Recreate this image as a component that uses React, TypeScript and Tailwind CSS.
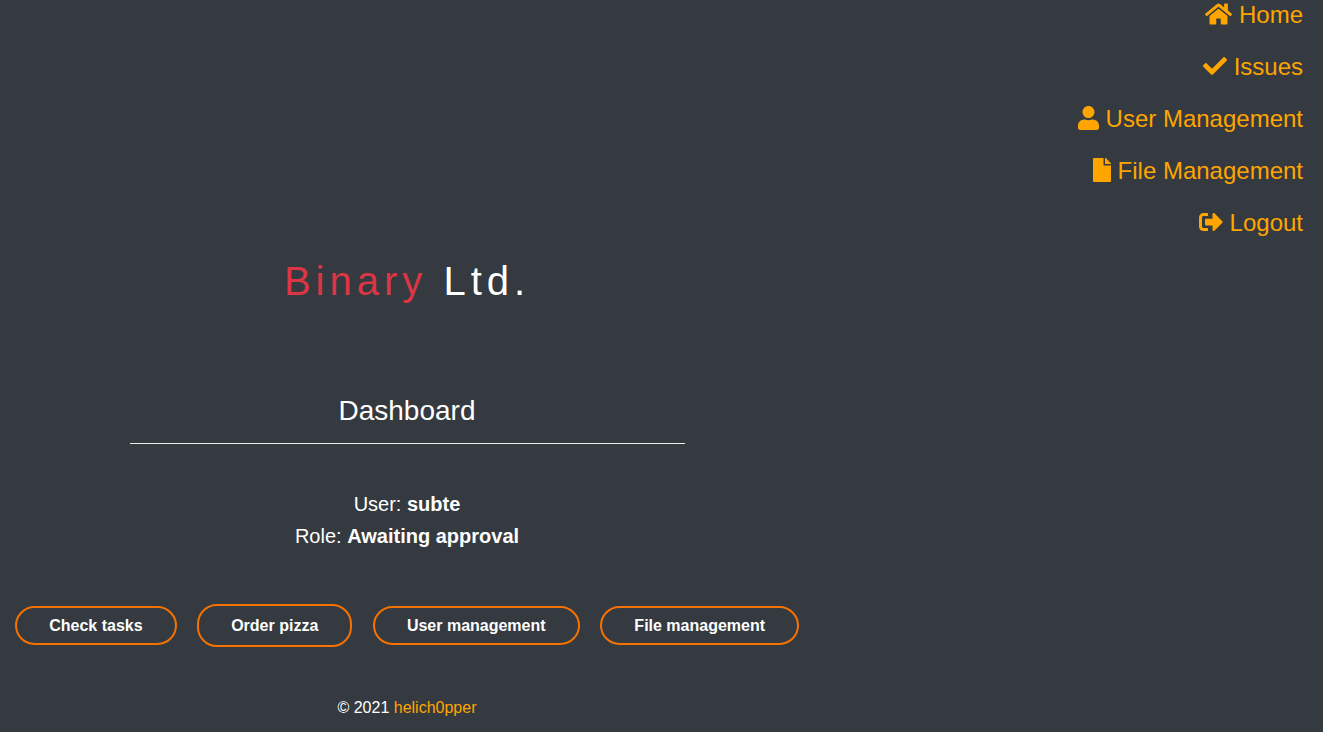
import React from 'react';
import { FaHome, FaCheck, FaUser, FaFile, FaSignOutAlt } from 'react-icons/fa';

const navLinks = [
  { label: 'Home', icon: FaHome, size: 'w-[27px] h-[24px]' },
  { label: 'Issues', icon: FaCheck, size: 'w-[24px] h-[24px]' },
  { label: 'User Management', icon: FaUser, size: 'w-[21px] h-[24px]' },
  { label: 'File Management', icon: FaFile, size: 'w-[18px] h-[24px]' },
  { label: 'Logout', icon: FaSignOutAlt, size: 'w-[24px] h-[24px]' },
];

function NavBar() {
  return (
    <nav className="absolute top-0 right-0 flex flex-col items-end pr-5">
      {navLinks.map((link) => {
        const Icon = link.icon;
        return (
          <a key={link.label} className="flex items-center gap-[7px] h-[52px] pb-[22px] pt-0 text-[24px] leading-[30px] text-[#ffa500]">
            <Icon className={`${link.size} -mt-[2px]`} />
            <span>{link.label}</span>
          </a>
        );
      })}
    </nav>
  );
}

function PillButton({ label, big }: { label: string; big?: boolean }) {
  return (
    <button
      className={`border-2 border-[#f57200] rounded-[20px] text-[16px] font-bold text-white bg-transparent ${big ? 'h-[43px] px-[32px]' : 'h-[39px] px-[32.2px]'}`}
    >
      {label}
    </button>
  );
}

export default function App() {
  return (
    <div className="relative min-h-[732px] h-[732px] overflow-hidden bg-[#343a40] text-white font-['Liberation_Sans',Arial,sans-serif]">
      <NavBar />
      <main className="w-[814px] flex flex-col items-center pt-[257px]">
        <h1 className="text-[40px] leading-[48px] tracking-[5px] text-[#dc3545]">
          Binary <span className="text-white">Ltd.</span>
        </h1>
        <h2 className="mt-[89px] text-[28px] leading-[34px]">Dashboard</h2>
        <hr className="w-[555px] mt-[15px] ml-[1px] border-t border-white/90" />
        <div className="mt-[44px] text-center text-[20px] leading-[32px]">
          <p>User: <b>subte</b></p>
          <p>Role: <b>Awaiting approval</b></p>
        </div>
        <div className="mt-[52px] flex items-center gap-[20.4px] w-full pl-[15px]">
          <PillButton label="Check tasks" />
          <PillButton label="Order pizza" big />
          <PillButton label="User management" />
          <PillButton label="File management" />
        </div>
        <p className="mt-[49px] text-[16px] leading-[24px]">
          © 2021 <span className="text-[#ffa500]">helich0pper</span>
        </p>
      </main>
    </div>
  );
}
